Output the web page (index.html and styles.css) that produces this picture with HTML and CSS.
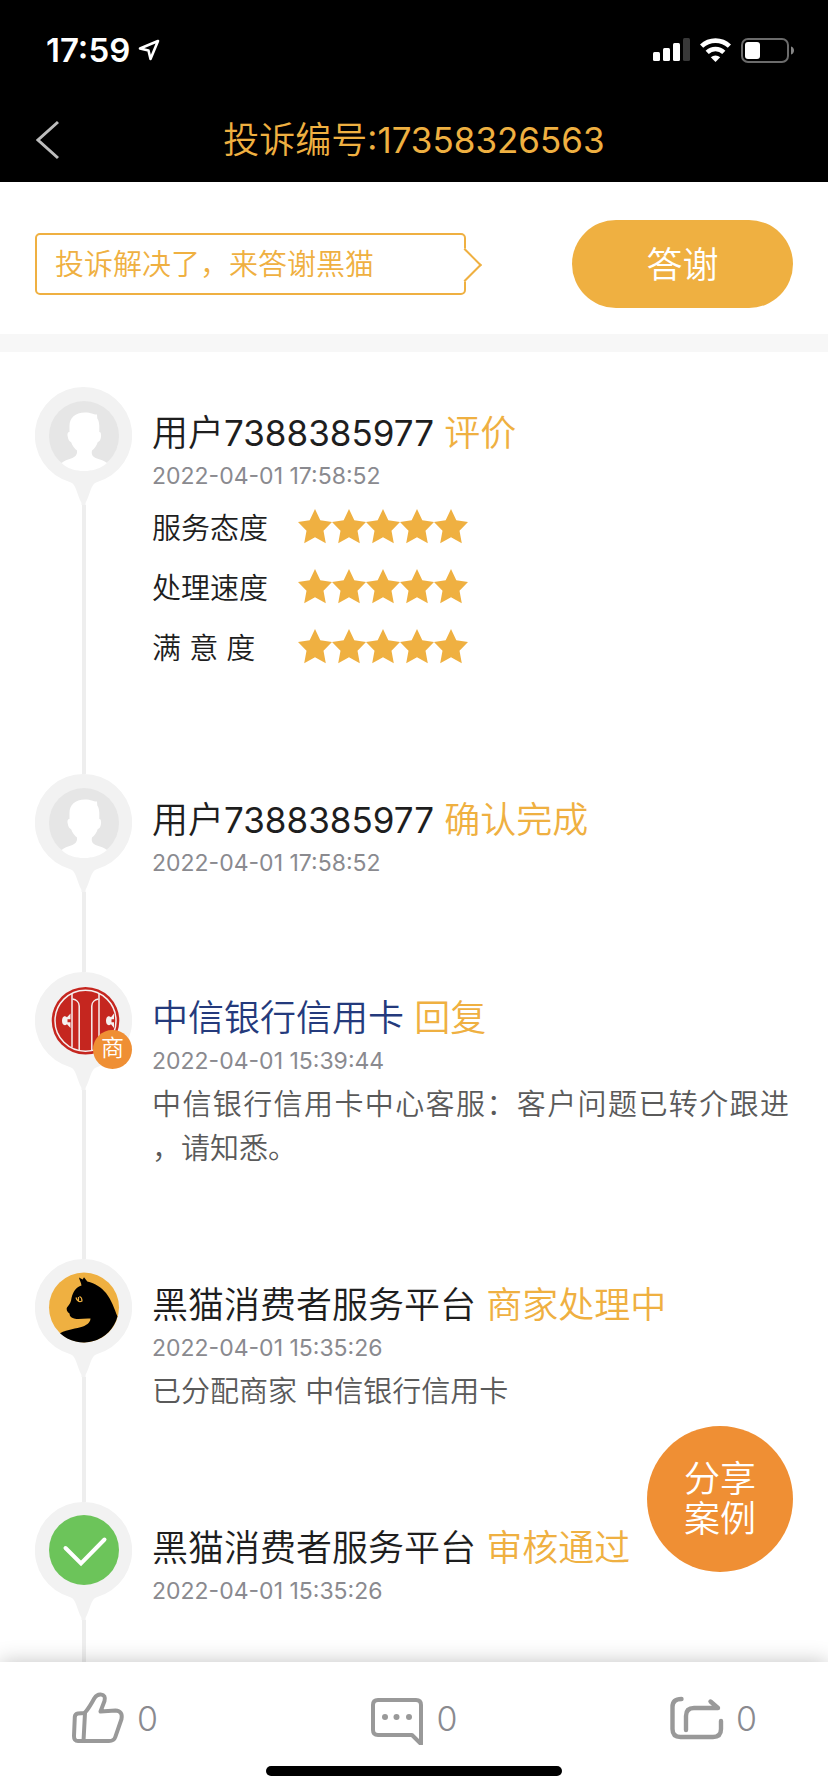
FILE: index.html
```html
<!DOCTYPE html>
<html lang="zh-CN">
<head>
<meta charset="utf-8">
<meta name="viewport" content="width=device-width, initial-scale=1">
<title>投诉编号:17358326563</title>
<link rel="stylesheet" href="styles.css">
</head>
<body>
<svg class="defs" aria-hidden="true">
  <symbol id="pin" viewBox="0 0 97 118">
    <path fill="#f2f2f2" d="M48.500 0A48.500 48.500 0 0 1 61 95.400C56 97.500 55.500 106 50.500 116V118H46.500V116C41.500 106 41 97.500 36 95.400A48.500 48.500 0 0 1 48.500 0Z"/>
  </symbol>
  <symbol id="person" viewBox="0 0 97 118">
    <circle cx="49" cy="49" r="35" fill="#e6e6e6"/>
    <path fill="#fff" d="M50 25.500C40 25.500 34.500 31 34.500 39V45C32.500 45 32 47 32.800 50C33.300 53 34.500 54.500 36 55C37.500 59 39.500 61.500 42 63.500C42.500 68 40 70 36 71.500C32 73 28.500 74 26.500 76C32 81.500 40 84 49 84C58 84 66 81.500 72 76C70 74 66 73 62 71.500C58 70 56 68 57 63.500C59.500 61.500 61.500 59 62.800 55C64.500 54.500 65.500 53 66 50C66.300 47 66 45 64.300 45V39C64 35 63.500 33 62.300 31.500L62 27.500C59 28 57 25.500 50 25.500Z"/>
  </symbol>
  <symbol id="stars" viewBox="0 0 171 35">
    <g fill="#efb041">
      <path id="star" d="M17 0L22.300 11.300L34 13L25.500 21.800L27.800 34.200L17 28.300L6.200 34.200L8.500 21.800L0 13L11.700 11.300Z"/>
      <use href="#star" x="34"/><use href="#star" x="68"/><use href="#star" x="102"/><use href="#star" x="136"/>
    </g>
  </symbol>
</svg>

<div class="app">
  <header class="top">
    <div class="status">
      <div class="status-left">
        <span class="clock">17:59</span>
        <svg width="22" height="22" viewBox="0 0 22 22"><path d="M20 2L2 9.500L10.500 11.500L12.500 20Z" fill="none" stroke="#fff" stroke-width="2.600" stroke-linejoin="round"/></svg>
      </div>
      <div class="status-right">
        <svg width="37" height="24" viewBox="0 0 37 24"><g fill="#fff"><rect x="0" y="14" width="7" height="9" rx="1.500"/><rect x="10" y="10" width="7" height="13" rx="1.500"/><rect x="20" y="5" width="7" height="18" rx="1.500"/><rect x="30" y="0" width="7" height="23" rx="1.500" opacity=".22"/></g></svg>
        <svg width="31" height="24" viewBox="0 0 31 24"><g fill="none" stroke="#fff" stroke-width="4.600"><path d="M1.600 8.200A20 20 0 0 1 29.400 8.200"/><path d="M7.200 14.300A12 12 0 0 1 23.800 14.300"/></g><path fill="#fff" d="M10.800 19.300A7 7 0 0 1 20.200 19.300L15.500 24Z"/></svg>
        <svg width="53" height="25" viewBox="0 0 53 25"><rect x="1" y="1" width="46" height="23" rx="6" fill="none" stroke="#6b6b6b" stroke-width="2"/><rect x="4" y="4" width="15" height="17" rx="3" fill="#fff"/><path d="M50 8.500C54 9.500 54 15.500 50 16.500Z" fill="#858585"/></svg>
      </div>
    </div>
    <nav class="nav">
      <button class="back" type="button" aria-label="返回"><svg width="24" height="40" viewBox="0 0 24 40"><path d="M22 2L2 20L22 38" fill="none" stroke="#bdbdbd" stroke-width="3"/></svg></button>
      <h1 class="title">投诉编号<span class="num">:17358326563</span></h1>
    </nav>
  </header>

  <section class="thanks">
    <p class="bubble">投诉解决了，来答谢黑猫</p>
    <button class="thanks-btn" type="button">答谢</button>
  </section>

  <main class="scroll">
    <ol class="timeline">
      <li class="entry">
        <div class="rail">
          <svg class="pin" viewBox="0 0 97 118"><use href="#pin"/><use href="#person"/></svg>
        </div>
        <div class="content">
          <h2 class="head">用户<span class="num">7388385977</span> <span class="action">评价</span></h2>
          <time class="date">2022-04-01 17:58:52</time>
          <dl class="rating">
            <div class="rate"><dt>服务态度</dt><dd><svg class="stars" role="img" aria-label="5"><use href="#stars"/></svg></dd></div>
            <div class="rate"><dt>处理速度</dt><dd><svg class="stars" role="img" aria-label="5"><use href="#stars"/></svg></dd></div>
            <div class="rate"><dt>满 意 度</dt><dd><svg class="stars" role="img" aria-label="5"><use href="#stars"/></svg></dd></div>
          </dl>
        </div>
      </li>
      <li class="entry">
        <div class="rail">
          <svg class="pin" viewBox="0 0 97 118"><use href="#pin"/><use href="#person"/></svg>
        </div>
        <div class="content">
          <h2 class="head">用户<span class="num">7388385977</span> <span class="action">确认完成</span></h2>
          <time class="date">2022-04-01 17:58:52</time>
        </div>
      </li>
      <li class="entry">
        <div class="rail">
          <svg class="pin" viewBox="0 0 97 118"><use href="#pin"/>
            <circle cx="50.500" cy="48.700" r="33.800" fill="#c5261f"/>
            <circle cx="50.500" cy="48.700" r="30.500" fill="none" stroke="#f5f0f0" stroke-width="1.500"/>
            <g fill="none" stroke="#f5f0f0" stroke-width="1.500">
              <path d="M37 22V75.500"/><path d="M64 22V75.500"/>
              <path d="M37.500 27C41 27.500 44.200 30 44.200 34V78"/><path d="M63.500 27C60 27.500 56.800 30 56.800 34V78"/>
            </g>
            <g fill="#f5f0f0">
              <path d="M35.500 41.500V56L32 52.300C29 54.500 27 52 27 48.700C27 45.500 29 43 32 45.200Z"/>
              <path d="M79 41.500V56L76 52.300C73 54.500 71 52 71 48.700C71 45.500 73 43 76 45.200Z"/>
            </g>
            <path fill="#c5261f" d="M32.500 47.200H36V50.200H32.500ZM76.500 47.200H80V50.200H76.500Z"/>
          </svg>
          <span class="badge">商</span>
        </div>
        <div class="content">
          <h2 class="head merchant">中信银行信用卡 <span class="action">回复</span></h2>
          <time class="date">2022-04-01 15:39:44</time>
          <p class="text">中信银行信用卡中心客服：客户问题已转介跟进，请知悉。</p>
        </div>
      </li>
      <li class="entry">
        <div class="rail">
          <svg class="pin" viewBox="0 0 97 118"><use href="#pin"/>
            <circle cx="49" cy="48.500" r="35" fill="#efb041"/>
            <path fill="#000" d="M44 18.500L47.700 20.500L49 18.300L52.300 22.500C60 24 67 29 71 34C77 42 79 49 82.500 57.500A35 35 0 0 1 25 74.300C33 70 41 70 48 67.500C53 65.500 55.500 62.500 55.500 59.500C50 59 45 60.500 40 59.700C36.500 59 34.500 57.500 34.500 54.500C32 53 31 50 32 48.500C35 45 36 43 36.500 39C38 33 41 28 46.500 26.500C46 23.500 44.500 21 44 18.500Z"/>
            <path fill="none" stroke="#efb041" stroke-width="1.200" d="M41 38.500C42 42.500 44.500 43.500 47 42C47 39.500 46 38 44.500 37.500M43.500 38V42"/>
          </svg>
        </div>
        <div class="content">
          <h2 class="head">黑猫消费者服务平台 <span class="action">商家处理中</span></h2>
          <time class="date">2022-04-01 15:35:26</time>
          <p class="text">已分配商家 中信银行信用卡</p>
        </div>
      </li>
      <li class="entry">
        <div class="rail">
          <svg class="pin" viewBox="0 0 97 118"><use href="#pin"/>
            <circle cx="49" cy="48" r="35" fill="#6cc45a"/>
            <path d="M30.500 46L46 61.500L69.500 37.500" fill="none" stroke="#fff" stroke-width="4" stroke-linecap="round"/>
          </svg>
        </div>
        <div class="content">
          <h2 class="head">黑猫消费者服务平台 <span class="action">审核通过</span></h2>
          <time class="date">2022-04-01 15:35:26</time>
        </div>
      </li>
    </ol>
  </main>

  <button class="share-case" type="button">分享<br>案例</button>

  <footer class="bottom">
    <div class="tools">
      <button class="tool" type="button" aria-label="点赞 0"><svg width="54" height="54" viewBox="0 0 54 54"><g fill="none" stroke="#999" stroke-width="4" stroke-linejoin="round" stroke-linecap="round"><path d="M13.500 22L7 22.500Q4 23 3.800 26L3 45Q2.900 50 7 50H38Q43 50 44.300 46L50.500 28Q52 20 44.500 19.500L29.500 20.500L33.500 10Q35 4 30 3.500Q26 3 23.500 7Q18 17 14.500 21Z"/><path d="M14 22L12.500 50"/></g></svg><span>0</span></button>
      <button class="tool" type="button" aria-label="评论 0"><svg width="54" height="54" viewBox="0 0 54 54"><path d="M8 9H46Q51 9 51 14V53L42 44H8Q3 44 3 39V14Q3 9 8 9Z" fill="none" stroke="#999" stroke-width="4" stroke-linejoin="round"/><g fill="#999"><circle cx="15" cy="26" r="3"/><circle cx="26.500" cy="26" r="3"/><circle cx="39" cy="26" r="3"/></g></svg><span>0</span></button>
      <button class="tool" type="button" aria-label="分享 0"><svg width="54" height="54" viewBox="0 0 54 54"><g fill="none" stroke="#999" stroke-width="4.400" stroke-linecap="round" stroke-linejoin="round"><path d="M11.500 8Q2.500 8 2.500 16V38Q2.500 46 10.500 46H43Q51 46 51 38V30"/><path d="M16 39V25Q16 17 24 17H48L40.500 10.500"/></g></svg><span>0</span></button>
    </div>
    <div class="home"></div>
  </footer>
</div>
</body>
</html>
```
FILE: styles.css
```css
* {
  box-sizing: border-box;
}

body,
h1,
h2,
p,
ol,
dl,
dd {
  margin: 0;
  padding: 0;
}

body {
  background: #fff;
  color: #1e1e1e;
  font-family: Inter, "Noto Sans CJK SC", sans-serif;
  font-weight: 350;
}

button {
  border: 0;
  padding: 0;
  background: none;
  color: inherit;
  font: inherit;
}

svg {
  display: block;
  flex: none;
}

.defs {
  position: absolute;
  width: 0;
  height: 0;
}

.app {
  position: relative;
  display: flex;
  flex-direction: column;
  height: 100vh;
  overflow: hidden;
}

.top {
  flex: none;
  background: #000;
}

.status {
  display: flex;
  justify-content: space-between;
  align-items: center;
  height: 100px;
  padding: 0 34px 0 46px;
  color: #fff;
}

.status-left,
.status-right {
  display: flex;
  align-items: center;
  gap: 10px;
}

.status-left {
  gap: 8px;
}

.clock {
  font-size: 33px;
  font-weight: 600;
}

.nav {
  display: grid;
  grid-template-columns: 1fr auto 1fr;
  align-items: center;
  height: 82px;
  padding: 0 36px 2px;
}

.title {
  color: #efb041;
  font-size: 36px;
  font-weight: 350;
  line-height: 44px;
}

.thanks {
  display: flex;
  flex: none;
  justify-content: space-between;
  align-items: center;
  padding: 38px 35px 26px;
  border-bottom: 18px solid #f7f7f7;
}

.bubble {
  position: relative;
  flex: 0 1 431px;
  padding: 8px 18px 6px;
  border: 2px solid #efb041;
  border-radius: 5px;
  color: #efb041;
  font-size: 29px;
  line-height: 44px;
}

.bubble::after {
  content: "";
  position: absolute;
  top: 18px;
  right: -13px;
  width: 22px;
  height: 22px;
  border: solid #efb041;
  border-width: 2px 2px 0 0;
  background: #fff;
  transform: rotate(45deg);
}

.thanks-btn {
  width: 221px;
  height: 88px;
  padding-bottom: 4px;
  border-radius: 44px;
  background: #efb041;
  color: #fff;
  font-size: 36px;
}

.scroll {
  flex: 1;
  min-height: 0;
  overflow-y: auto;
  scrollbar-width: none;
}

.timeline {
  padding: 35px 35px 0;
  list-style: none;
}

.entry {
  display: flex;
  gap: 20px;
}

.rail {
  position: relative;
  display: flex;
  flex: none;
  flex-direction: column;
  align-items: center;
  width: 97px;
}

.rail::after {
  content: "";
  flex: 1;
  width: 4px;
  background: #eee;
}

.pin {
  width: 97px;
  height: 118px;
}

.badge {
  position: absolute;
  top: 58px;
  right: 0;
  width: 39px;
  height: 39px;
  border-radius: 50%;
  background: #ef8f34;
  color: #fff;
  font-size: 23px;
  line-height: 37px;
  text-align: center;
}

.content {
  flex: 1;
  min-width: 0;
  padding: 24px 0 88px;
}

.head {
  font-size: 36px;
  font-weight: 350;
  line-height: 44px;
}

.num {
  font-size: 35px;
  font-weight: 400;
}

.merchant {
  color: #243a7c;
}

.action {
  color: #efb041;
}

.date {
  display: block;
  color: #8a8a8f;
  font-size: 23px;
  font-weight: 400;
  line-height: 42px;
}

.rating {
  margin-bottom: 9px;
  font-size: 29px;
}

.rate {
  display: flex;
  align-items: center;
  height: 60px;
  padding-bottom: 2px;
}

.rate dt {
  width: 146px;
}

.stars {
  width: 171px;
  height: 35px;
}

.text {
  padding: 1px 4px 0 0;
  color: #5a5a5a;
  font-size: 29px;
  line-height: 44px;
  line-break: anywhere;
  text-align: justify;
}

.share-case {
  position: absolute;
  right: 35px;
  bottom: 220px;
  width: 146px;
  height: 146px;
  border-radius: 50%;
  background: #ef8f34;
  color: #fff;
  font-size: 36px;
  line-height: 40px;
}

.bottom {
  position: relative;
  flex: none;
  padding: 28px 71px 16px;
  background: #fff;
  box-shadow: 0 0 20px rgba(0, 0, 0, 0.24);
}

.tools {
  display: flex;
  justify-content: space-between;
  align-items: center;
  height: 56px;
}

.tool {
  display: flex;
  align-items: center;
  gap: 12px;
  color: #8a8a8f;
  font-size: 34px;
  font-weight: 300;
}

.home {
  width: 296px;
  height: 10px;
  margin: 20px auto 0;
  border-radius: 5px;
  background: #000;
}
```
